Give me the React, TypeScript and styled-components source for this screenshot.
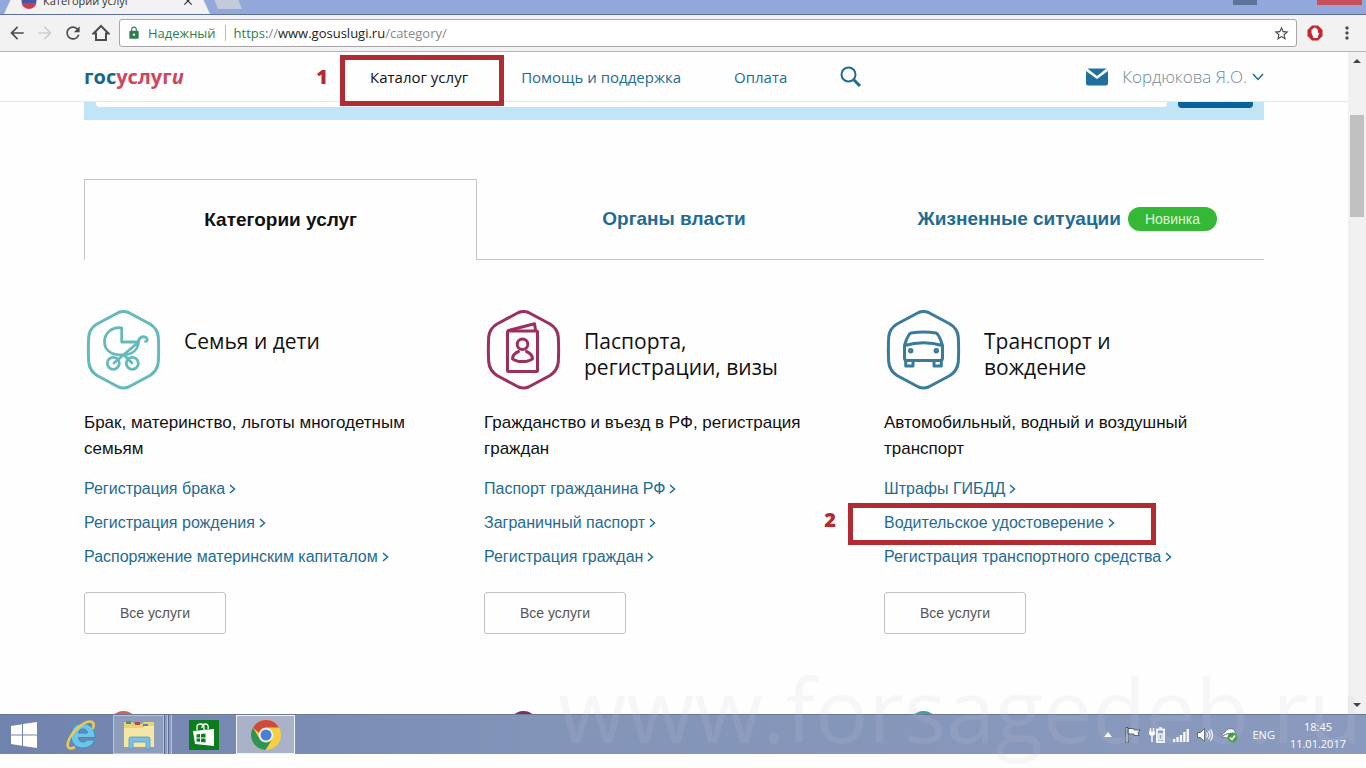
import React from "react";
import styled, { createGlobalStyle } from "styled-components";
import { MdArrowBack, MdArrowForward, MdRefresh, MdLock, MdStarBorder, MdMoreVert, MdClose } from "react-icons/md";

const ui = '"Open Sans", "Noto Sans", sans-serif';
const arial = '"Liberation Sans", Arial, sans-serif';
const linkColor = "#1f6b93";
const alertRed = "#b22b33";

const GlobalStyle = createGlobalStyle`
  *, *::before, *::after { box-sizing: border-box; }
  body { margin: 0; background: #fefefe; font-family: ${arial}; color: #111; }
  button, input { font: inherit; }
  a { text-decoration: none; color: inherit; }
`;

const Desktop = styled.div`
  position: relative;
  display: flex;
  flex-direction: column;
  height: 100vh;
  padding-bottom: 14px;
  overflow: hidden;
`;

/* Browser frame */
const TabStrip = styled.div`
  display: flex;
  align-items: flex-end;
  height: 15px;
  padding-left: 4px;
  overflow: hidden;
  background: #92a8da;
  border-bottom: 1px solid #5f6f9c;
`;
const BrowserTab = styled.div`
  display: flex;
  align-items: center;
  gap: 6px;
  width: 206px;
  height: 26px;
  padding: 0 15px 0 17px;
  flex: none;
  background: #f2f2f3;
  clip-path: polygon(12px 0, 194px 0, 100% 100%, 0 100%);
  font: 11px/26px ${ui};
  color: #333;
`;
const TabTitle = styled.span`
  flex: 1;
`;
const PlainButton = styled.button`
  display: flex;
  align-items: center;
  justify-content: center;
  padding: 0;
  border: 0;
  background: none;
  color: inherit;
`;
const NewTab = styled(PlainButton)`
  width: 32px;
  height: 20px;
  margin-bottom: 5px;
  flex: none;
  background: #c3cadb;
  clip-path: polygon(0 0, 24px 0, 100% 100%, 8px 100%);
`;
const WindowButtons = styled.div`
  display: flex;
  align-self: flex-start;
  gap: 60px;
  margin-left: auto;
  padding-right: 4px;
`;
const WindowButton = styled(PlainButton)<{ $close?: boolean }>`
  width: ${(p) => (p.$close ? 45 : 24)}px;
  height: 5px;
  background: ${(p) => (p.$close ? "#c8505a" : "#5c7498")};
`;

const Toolbar = styled.div`
  display: flex;
  align-items: center;
  height: 37px;
  padding: 0 9px 0 7px;
  flex: none;
  background: #f2f2f3;
  border-bottom: 1px solid #b4b2b4;
  color: #4d4d4d;
`;
const ToolButton = styled(PlainButton)<{ $faded?: boolean }>`
  width: 20px;
  height: 20px;
  margin-right: 8px;
  font-size: 20px;
  color: ${(p) => (p.$faded ? "#cfcfcf" : "#4d4d4d")};
`;
const Omnibox = styled.div`
  display: flex;
  align-items: center;
  flex: 1;
  height: 28px;
  padding: 0 6px 0 7px;
  margin-right: 10px;
  background: #fff;
  border: 1px solid #a8a6a8;
  border-radius: 3px;
  font: 13px/20px ${ui};
  color: #888;
`;
const Secure = styled.span`
  display: flex;
  align-items: center;
  gap: 7px;
  padding-right: 9px;
  margin-right: 8px;
  border-right: 1px solid #bbb;
  line-height: 16px;
  color: #2e7d4f;
`;
const Url = styled.div`
  flex: 1;
  outline: none;
  em { font-style: normal; color: #2e7d4f; }
  b { font-weight: 400; color: #222; }
`;

/* Page */
const Viewport = styled.div`
  display: flex;
  flex: 1;
  min-height: 0;
  overflow: hidden;
`;
const Page = styled.main`
  flex: 1;
  min-width: 0;
  overflow: hidden;
`;
const Container = styled.div`
  max-width: 1180px;
  margin: 0 auto;
`;
const Header = styled.header`
  position: relative;
  z-index: 2;
  background: #fefefe;
  border-bottom: 1px solid #e9e9e9;
`;
const HeaderRow = styled(Container)`
  display: flex;
  align-items: center;
  height: 49px;
  font-family: ${ui};
`;
const Logo = styled.a`
  width: 286px;
  font: 700 20px/24px ${ui};
  color: #d0455c;
  span { color: #17648f; }
`;
const Nav = styled.nav`
  display: flex;
  gap: 53px;
`;
const NavLink = styled.a<{ $active?: boolean }>`
  position: relative;
  display: flex;
  align-items: center;
  height: 49px;
  font-size: 15px;
  color: ${(p) => (p.$active ? "#111" : linkColor)};
`;
const UserLink = styled.a`
  display: flex;
  align-items: center;
  gap: 5px;
  font-size: 17px;
  font-weight: 300;
  color: #7089a0;
`;
const MailLink = styled.a`
  display: flex;
  margin: 0 14px 0 auto;
`;
const Mark = styled.span`
  position: absolute;
  border: 5px solid ${alertRed};
  pointer-events: none;
  b {
    position: absolute;
    right: calc(100% + 17px);
    top: 50%;
    margin-top: -19px;
    font: 800 20px/30px ${ui};
    color: ${alertRed};
  }
`;
const NavMark = styled(Mark)`
  inset: 3px -36px -5px -30px;
`;
const LinkMark = styled(Mark)`
  inset: -3px -41px -5px -36px;
`;

const SearchStrip = styled.form`
  display: flex;
  align-items: flex-end;
  gap: 10px;
  height: 18px;
  padding: 0 11px 12px;
  overflow: hidden;
  background: #c1e4f7;
`;
const SearchInput = styled.input`
  flex: 1;
  height: 40px;
  border: 1px solid #cfdde6;
  border-radius: 4px;
  background: #fff;
`;
const SearchButton = styled.button`
  width: 75px;
  height: 40px;
  border: 0;
  border-radius: 4px;
  background: #0a629b;
`;

const Tabs = styled.div`
  display: grid;
  grid-template-columns: repeat(3, 1fr);
  margin-top: 59px;
`;
const Tab = styled.button<{ $active?: boolean }>`
  display: flex;
  align-items: center;
  justify-content: center;
  gap: 7px;
  height: 81px;
  padding: 0;
  background: none;
  border: solid #c6c6c8;
  border-width: ${(p) => (p.$active ? "1px 1px 0" : "0 0 1px")};
  font: 700 19px/24px ${arial};
  color: ${(p) => (p.$active ? "#111" : linkColor)};
`;
const Badge = styled.span`
  padding: 0 17px;
  border-radius: 12px;
  background: #35b835;
  font: 14px/24px ${arial};
  color: #dff5dc;
`;

const Cards = styled.div`
  display: grid;
  grid-template-columns: repeat(3, 1fr);
  gap: 77px 20px;
  margin-top: 50px;
`;
const Card = styled.section`
  display: flex;
  flex-direction: column;
  align-items: flex-start;
`;
const CardHead = styled.div`
  display: flex;
  gap: 20px;
  min-height: 80px;
`;
const CardTitle = styled.h2`
  margin: 18px 0 0;
  max-width: 200px;
  font: 400 21px/26px ${ui};
`;
const CardText = styled.p`
  margin: 20px 0 10px;
  max-width: 330px;
  font-size: 17px;
  line-height: 26px;
`;
const LinkList = styled.ul`
  margin: 0 0 18px;
  padding: 0;
  list-style: none;
`;
const ServiceLink = styled.a`
  position: relative;
  display: inline-flex;
  align-items: center;
  gap: 4px;
  height: 34px;
  font-size: 16px;
  color: ${linkColor};
`;
const ListItem = styled.li`
  display: flex;
`;
const AllButton = styled.button`
  width: 142px;
  height: 42px;
  border: 1px solid #c4c4c6;
  border-radius: 3px;
  background: #fefefe;
  font-size: 14px;
  color: #555;
`;

const Scrollbar = styled.div`
  display: flex;
  flex-direction: column;
  align-items: center;
  justify-content: space-between;
  width: 18px;
  padding: 6px 0;
  background: #f1f1f2;
`;
const ScrollTrack = styled.div`
  flex: 1;
  padding-top: 51px;
`;
const Thumb = styled.div`
  width: 14px;
  height: 102px;
  background: #c1c1c2;
`;

/* Windows taskbar */
const Taskbar = styled.footer`
  display: flex;
  align-items: center;
  height: 40px;
  flex: none;
  background: linear-gradient(90deg, #7083ae, #8394b9 40%, #8a9abf);
  border-top: 1px solid #6b7894;
  font: 11px/17px ${ui};
  color: #fff;
`;
const TaskButton = styled(PlainButton)<{ $width: number; $frame?: "open" | "active" }>`
  width: ${(p) => p.$width}px;
  height: 39px;
  border: ${(p) => (p.$frame === "active" ? "1px solid #f3f4f8" : p.$frame === "open" ? "1px solid #b7c0d6" : "0")};
  background: ${(p) => (p.$frame === "active" ? "#a9b2c8" : p.$frame === "open" ? "#8f9dbd" : "none")};
`;
const StackEdge = styled.span`
  width: 4px;
  height: 39px;
  background: #8f9dbd;
  border-right: 1px solid #b7c0d6;
  border-left: 1px solid #5b6a92;
`;
const Tray = styled.div`
  display: flex;
  align-items: center;
  gap: 8px;
  margin-left: auto;
  padding-right: 20px;
`;
const Overflow = styled(PlainButton)`
  margin-right: 5px;
`;
const Lang = styled.span`
  margin: 0 7px 0 6px;
`;
const Clock = styled.time`
  text-align: center;
`;
const Watermark = styled.div`
  position: absolute;
  left: 558px;
  right: 0;
  bottom: -1px;
  overflow: hidden;
  white-space: nowrap;
  font: 400 88px/120px ${ui};
  color: rgba(195, 200, 215, 0.14);
  pointer-events: none;
`;

const Chevron = () => (
  <svg width="7" height="10" viewBox="0 0 7 10" fill="none" stroke="currentColor" strokeWidth="1.5">
    <path d="M1 1l4.5 4L1 9" />
  </svg>
);

const HexIcon = ({ color, children }: { color: string; children?: React.ReactNode }) => (
  <svg width="80" height="80" viewBox="0 0 80 80" fill="none" stroke={color} strokeWidth="3" strokeLinejoin="round" strokeLinecap="round">
    <path d="M34.5 2.5Q39.500 .500 44.500 2.500L66 14Q73.500 18.500 74.300 27Q75 40 74.300 52Q73.500 60.500 66 65.500L44.500 77Q39.500 79 34.500 77L13 65.500Q5.500 60.500 4.700 52Q4 40 4.700 27Q5.500 18.500 13 14Z" />
    {children}
  </svg>
);

const Stroller = () => (
  <g strokeWidth="2.800">
    <path d="M37.700 17.800V32H54.500C54 40 48 45 38 45C27 45 20.500 40 20.500 31.500C20.500 23 28 16.500 37.700 17.800Z" />
    <path d="M30 53L54 32.500C55 27.500 58 26.500 60.500 26.800C63.800 27.300 64 31 61.500 31.500M48 53L40.500 45.500" />
    <circle cx="29.300" cy="53.300" r="6" />
    <circle cx="48.300" cy="53.300" r="6" />
  </g>
);
const Passport = () => (
  <>
    <rect x="23.500" y="21" width="30" height="40.500" rx="1" />
    <path d="M24.500 20.500L50.500 13.800L51.500 20" />
    <circle cx="38.500" cy="34.300" r="5.300" />
    <path d="M34.500 41.500C31 43 28.500 45.500 28.500 48.800C33 52.500 44 52.500 48.500 48.800C48.500 45.500 46 43 42.500 41.500" />
  </>
);
const Car = () => (
  <>
    <path d="M27 23Q39.500 21 52 23Q55 24 58.500 35.500V48Q58.500 50.500 56 50.500H23Q20.500 50.500 20.500 48V35.500Q24 24 27 23ZM20.500 35.500Q39.500 30 58.500 35.500" />
    <path d="M21.700 50.500V56H29V50.500M50 50.500V56H57.300V50.500" />
    <circle cx="26.700" cy="40.700" r="1.200" />
    <circle cx="52.300" cy="40.700" r="1.200" />
  </>
);

const cards = [
  {
    title: "Семья и дети",
    color: "#63b9bc",
    icon: <Stroller />,
    text: "Брак, материнство, льготы многодетным семьям",
    links: ["Регистрация брака", "Регистрация рождения", "Распоряжение материнским капиталом"],
  },
  {
    title: "Паспорта, регистрации, визы",
    color: "#9c2f5e",
    icon: <Passport />,
    text: "Гражданство и въезд в РФ, регистрация граждан",
    links: ["Паспорт гражданина РФ", "Заграничный паспорт", "Регистрация граждан"],
  },
  {
    title: "Транспорт и вождение",
    color: "#397b9c",
    icon: <Car />,
    text: "Автомобильный, водный и воздушный транспорт",
    links: ["Штрафы ГИБДД", "Водительское удостоверение", "Регистрация транспортного средства"],
    marked: 1,
  },
];
const nextRow = ["#d9604f", "#7b2d6b", "#3f9fa8"];

const WindowsLogo = () => (
  <svg width="26" height="26" viewBox="0 0 26 26" fill="#fff">
    <path d="M0 4L11 2.300V12.500H0ZM12 2.100L26 0V12.500H12ZM0 13.500H11V23.700L0 22ZM12 13.500H26V26L12 23.900Z" />
  </svg>
);
const ExplorerLogo = () => (
  <svg width="32" height="30" viewBox="0 0 32 30">
    <path d="M1 3q0-1 1-1h7l2 2h8l2-2h9q1 0 1 1v24H1z" fill="#e8d27c" />
    <path d="M3 1h5v3H3z" fill="#4f9a58" />
    <path d="M12 2h5v3h-5z" fill="#c5433c" />
    <path d="M20 4h5v3h-5z" fill="#4c86b8" />
    <path d="M1 8h18l2-2h10v21H1z" fill="#f5e6a3" />
    <path d="M6 29V19q0-2 2-2h17q2 0 2 2v10h-4v-6q0-1-1-1H11q-1 0-1 1v6z" fill="#79bfe6" stroke="#4f9cc9" strokeWidth=".8" />
  </svg>
);
const IeLogo = () => (
  <svg width="32" height="32" viewBox="0 0 32 32">
    <path d="M17.500 4.500C25 4.500 30 10 30 18.500H13.500C13.800 21.500 15.500 23 18 23C20 23 21.500 22.200 22.300 21H29.500C27.800 26 23.500 29 17.800 29C10.500 29 6 24 6 16.800C6 9.500 10.500 4.500 17.500 4.500ZM13.500 14H22.500C22.200 11.300 20.500 10 18 10C15.500 10 14 11.500 13.500 14Z" fill="#6cc5ec" stroke="#2f8fc4" strokeWidth="1" />
    <path d="M10 28C3 32 .800 27 4.500 19.500C10 9 22 .500 27 3C29.300 4.300 28.800 7.500 27.500 10" fill="none" stroke="#e8c95a" strokeWidth="2.600" />
  </svg>
);
const StoreLogo = () => (
  <svg width="30" height="30" viewBox="0 0 30 30">
    <path d="M0 0h30v30H0z" fill="#0c7d1c" />
    <path d="M8 10V7q0-3 3.500-3T15 7v3M13 8q0-4 3.500-4T19 9" fill="none" stroke="#fff" strokeWidth="1.300" />
    <path d="M4 11l21-2v17L6 24z" fill="#fff" />
    <path d="M7.500 14.500l3.500-.400V17.500H7.500zM12 14l4.500-.600v4.100H12zM7.500 18.500H11v3.300l-3.500-.400zM12 18.500h4.500v4L12 22z" fill="#0c7d1c" />
  </svg>
);
const ChromeLogo = () => (
  <svg width="30" height="30" viewBox="0 0 30 30">
    <circle cx="15" cy="15" r="15" fill="#f5d042" />
    <path d="M2 7.500A15 15 0 0 1 28 7.500H15A7.500 7.500 0 0 0 8 13z" fill="#d1493e" />
    <path d="M2 7.500A15 15 0 0 0 14.500 30L21.500 18.700A7.500 7.500 0 0 1 8.500 18.700z" fill="#2f9455" />
    <circle cx="15" cy="15" r="7.200" fill="#f4f5f7" />
    <circle cx="15" cy="15" r="5.500" fill="#4a7fd6" />
  </svg>
);

const Flag = () => (
  <svg width="16" height="16" viewBox="0 0 16 16" fill="#fff" stroke="#333c50" strokeWidth=".8">
    <path d="M1 .500h2V16H1zM3 1.500h6v1.500h6l-2 3 1 2.500H9V7H3z" />
  </svg>
);
const Battery = () => (
  <svg width="16" height="16" viewBox="0 0 16 16" fill="none">
    <path d="M1.500 1V5M4.500 1V5M3 7V15" stroke="#fff" strokeWidth="1.400" />
    <path d="M0 4.500H6V6.500Q6 8.500 3 8.500Q0 8.500 0 6.500Z" fill="#fff" />
    <rect x="8" y="2.500" width="7" height="12.500" stroke="#fff" strokeWidth="1.800" />
    <path d="M10 1H13M10 12.500H13V7H10Z" stroke="#fff" strokeWidth="1.400" />
  </svg>
);
const Signal = () => (
  <svg width="16" height="16" viewBox="0 0 16 16" fill="#fff">
    <path d="M0 12h2.300v3H0zM3.400 10h2.300v5H3.400zM6.800 8h2.300v7H6.800zM10.200 5h2.300v10h-2.300zM13.600 2h2.300v13h-2.300z" />
  </svg>
);
const Speaker = () => (
  <svg width="16" height="16" viewBox="0 0 16 16" fill="none" stroke="#fff" strokeWidth="1.200">
    <path d="M.500 5.500h3L7.500 1.500v13L3.500 10.500h-3z" fill="#fff" stroke="#333c50" strokeWidth=".7" />
    <path d="M9.500 5.500q2 2.500 0 5M11.500 3.800q3 4.200 0 8.400M13.500 2.300q4 5.700 0 11.400" />
  </svg>
);
const SafeRemove = () => (
  <svg width="17" height="16" viewBox="0 0 17 16">
    <path d="M1 10q-1-3 3-5 2-4 6-3.500 4 .500 4 3l1 3-6 4z" fill="#fff" stroke="#4b566e" strokeWidth=".7" />
    <path d="M2 9q5-4 9-1" fill="none" stroke="#4b566e" />
    <circle cx="11.500" cy="10.500" r="5" fill="#3f9c3a" />
    <path d="M9 10.500l2 2 3-4" fill="none" stroke="#fff" strokeWidth="1.500" />
  </svg>
);

export default function App() {
  return (
    <Desktop>
      <GlobalStyle />
      <TabStrip>
        <BrowserTab>
          <svg width="16" height="16" viewBox="0 0 16 16">
            <circle cx="8" cy="8" r="7.500" fill="#4656a4" />
            <path d="M.700 10a7.500 7.500 0 0 0 14.600 0z" fill="#cf3b4b" />
          </svg>
          <TabTitle>Категории услуг</TabTitle>
          <PlainButton aria-label="Закрыть вкладку"><MdClose size={14} /></PlainButton>
        </BrowserTab>
        <NewTab aria-label="Новая вкладка" />
        <WindowButtons>
          <WindowButton aria-label="Свернуть" />
          <WindowButton $close aria-label="Закрыть" />
        </WindowButtons>
      </TabStrip>
      <Toolbar>
        <ToolButton aria-label="Назад"><MdArrowBack /></ToolButton>
        <ToolButton $faded aria-label="Вперёд"><MdArrowForward /></ToolButton>
        <ToolButton aria-label="Обновить"><MdRefresh /></ToolButton>
        <ToolButton aria-label="Домой">
          <svg width="18" height="18" viewBox="0 0 18 18" fill="none" stroke="currentColor" strokeWidth="2">
            <path d="M1.500 9.500L9 2L16.500 9.500H14V16H4V9.500Z" />
          </svg>
        </ToolButton>
        <Omnibox>
          <Secure><MdLock size={14} />Надежный</Secure>
          <Url role="textbox" aria-label="Адрес" contentEditable suppressContentEditableWarning spellCheck={false}>
            <em>https:</em>//<b>www.gosuslugi.ru</b>/category/
          </Url>
          <PlainButton aria-label="В закладки"><MdStarBorder size={17} color="#4d4d4d" /></PlainButton>
        </Omnibox>
        <PlainButton aria-label="Блокировщик рекламы">
          <svg width="16" height="16" viewBox="0 0 16 16">
            <path d="M5 .500h6L15.500 5v6L11 15.500H5L.500 11V5z" fill="#c1272d" />
            <path d="M4.500 8V4.500h1.200V3.200h1.500V2.500h1.300v1h1.500v1h1V8l1.300-.500L10.500 13h-4z" fill="#fff" />
          </svg>
        </PlainButton>
        <PlainButton aria-label="Меню"><MdMoreVert size={20} style={{ marginLeft: 14 }} /></PlainButton>
      </Toolbar>

      <Viewport>
        <Page>
          <Header>
            <HeaderRow>
              <Logo href="#"><span>гос</span>услуг<i>и</i></Logo>
              <Nav>
                <NavLink href="#" $active>
                  Каталог услуг
                  <NavMark><b>1</b></NavMark>
                </NavLink>
                <NavLink href="#">Помощь и поддержка</NavLink>
                <NavLink href="#">Оплата</NavLink>
                <NavLink href="#" aria-label="Поиск">
                  <svg width="21" height="21" viewBox="0 0 21 21" fill="none" stroke="currentColor">
                    <circle cx="8.500" cy="8.500" r="7" strokeWidth="2" />
                    <path d="M13.500 13.500L20 20" strokeWidth="3" />
                  </svg>
                </NavLink>
              </Nav>
              <MailLink href="#" aria-label="Почта">
                <svg width="22" height="18" viewBox="0 0 22 18">
                  <path d="M0 3V15.500Q0 17.500 2 17.500H20Q22 17.500 22 15.500V3L11 11Z" fill="#20709f" />
                  <path d="M1.500 .500H20.500L11 8Z" fill="#20709f" />
                </svg>
              </MailLink>
              <UserLink href="#">
                Кордюкова Я.О.
                <svg width="12" height="8" viewBox="0 0 12 8" fill="none" stroke={linkColor} strokeWidth="1.500">
                  <path d="M1 1l5 5.500L11 1" />
                </svg>
              </UserLink>
            </HeaderRow>
          </Header>
          <Container>
            <SearchStrip>
              <SearchInput aria-label="Поиск услуг" />
              <SearchButton type="button" aria-label="Найти" />
            </SearchStrip>
            <Tabs role="tablist">
              <Tab role="tab" aria-selected $active>Категории услуг</Tab>
              <Tab role="tab">Органы власти</Tab>
              <Tab role="tab">Жизненные ситуации <Badge>Новинка</Badge></Tab>
            </Tabs>
            <Cards>
              {cards.map((card) => (
                <Card key={card.title}>
                  <CardHead>
                    <HexIcon color={card.color}>{card.icon}</HexIcon>
                    <CardTitle>{card.title}</CardTitle>
                  </CardHead>
                  <CardText>{card.text}</CardText>
                  <LinkList>
                    {card.links.map((label, i) => (
                      <ListItem key={label}>
                        <ServiceLink href="#">
                          {label}
                          <Chevron />
                          {card.marked === i && <LinkMark><b>2</b></LinkMark>}
                        </ServiceLink>
                      </ListItem>
                    ))}
                  </LinkList>
                  <AllButton>Все услуги</AllButton>
                </Card>
              ))}
              {nextRow.map((color) => (
                <Card key={color}>
                  <HexIcon color={color} />
                </Card>
              ))}
            </Cards>
          </Container>
        </Page>
        <Scrollbar>
          <svg width="8" height="6" viewBox="0 0 8 6" fill="#444"><path d="M0 5L4 1L8 5Z" /></svg>
          <ScrollTrack><Thumb /></ScrollTrack>
          <svg width="8" height="6" viewBox="0 0 8 6" fill="#444"><path d="M0 1L4 5L8 1Z" /></svg>
        </Scrollbar>
      </Viewport>

      <Taskbar>
        <TaskButton $width={48} aria-label="Пуск"><WindowsLogo /></TaskButton>
        <TaskButton $width={65} aria-label="Internet Explorer"><IeLogo /></TaskButton>
        <TaskButton $width={51} $frame="open" aria-label="Проводник"><ExplorerLogo /></TaskButton>
        <StackEdge />
        <StackEdge />
        <TaskButton $width={64} aria-label="Магазин"><StoreLogo /></TaskButton>
        <TaskButton $width={59} $frame="active" aria-label="Google Chrome"><ChromeLogo /></TaskButton>
        <Tray>
          <Overflow aria-label="Показать скрытые значки">
            <svg width="8" height="5" viewBox="0 0 8 5" fill="#fff"><path d="M0 5L4 0L8 5Z" /></svg>
          </Overflow>
          <Flag />
          <Battery />
          <Signal />
          <Speaker />
          <SafeRemove />
          <Lang>ENG</Lang>
          <Clock>18:45<br />11.01.2017</Clock>
        </Tray>
      </Taskbar>
      <Watermark aria-hidden>www.forsagedeb.ru</Watermark>
    </Desktop>
  );
}
